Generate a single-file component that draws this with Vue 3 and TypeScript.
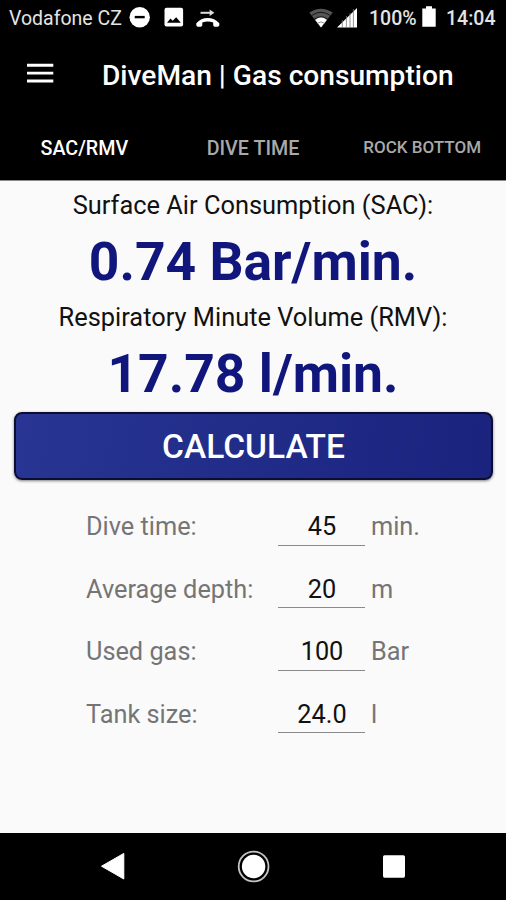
<script setup lang="ts">
import { ref } from 'vue'

interface Field {
  label: string
  value: string
  unit: string
}

const tabs: string[] = ['SAC/RMV', 'DIVE TIME', 'ROCK BOTTOM']
const activeTab = ref(0)

const fields = ref<Field[]>([
  { label: 'Dive time:', value: '45', unit: 'min.' },
  { label: 'Average depth:', value: '20', unit: 'm' },
  { label: 'Used gas:', value: '100', unit: 'Bar' },
  { label: 'Tank size:', value: '24.0', unit: 'l' },
])

const sac = ref('0.74')
const rmv = ref('17.78')

function calculate(): void {
  const [time, depth, gas, tank] = fields.value.map((f) => Number(f.value))
  const rate = gas / time / (depth / 10 + 1)
  sac.value = rate.toFixed(2)
  rmv.value = (rate * tank).toFixed(2)
}
</script>

<template>
  <div class="screen">
    <header class="status">
      <span class="carrier">Vodafone CZ</span>
      <svg class="dnd" width="22" height="22" viewBox="0 0 22 22">
        <circle cx="10.7" cy="11.2" r="10.2" fill="#fff" />
        <rect x="5.7" y="9.9" width="10" height="2.4" fill="#000" />
      </svg>
      <svg class="photo" width="20" height="20" viewBox="0 0 20 20">
        <rect x="0.5" y="0.7" width="18.6" height="18.8" rx="2" fill="#fff" />
        <path d="M3 15.7 L6.5 11.4 L8.7 13.7 L12.2 10.2 L16.8 15.7 Z" fill="#000" />
      </svg>
      <svg class="call" width="24" height="20" viewBox="0 0 24 20">
        <path d="M4.5 3.8 H14.5" fill="none" stroke="#ddd" stroke-width="2" />
        <path d="M13.6 0.6 L18.4 3.8 L13.6 7 Z" fill="#ddd" />
        <path
          d="M0.3 14.2 Q5 9 11.7 9 Q18.6 9 23.3 14.2 V16.6 L22 17.8 H18.4 L17.2 16.6 V13.4 Q11.7 11.6 6.3 13.4 V16.6 L5.1 17.8 H1.5 L0.3 16.6 Z"
          fill="#fff"
        />
      </svg>
      <span class="spacer"></span>
      <svg class="wifi" width="24" height="20" viewBox="0 0 24 20">
        <path d="M0.3 4.5 Q12 -3.2 23.7 4.5 L12 19.5 Z" fill="#555" />
        <path d="M2.8 7.4 Q12 1.2 21.2 7.4 M5.4 11 Q12 6.5 18.6 11" fill="none" stroke="#161616" stroke-width="1" />
        <path d="M6.2 12 Q12 7.2 17.8 12 L12 19.5 Z" fill="#fff" />
        <path d="M8 15.4 Q12 12.4 16 15.4" fill="none" stroke="#777" stroke-width="0.8" />
      </svg>
      <svg class="signal" width="20" height="20" viewBox="0 0 20 20">
        <path d="M0 19.5 L20 0 V19.5 Z" fill="#fff" />
        <path d="M5.3 12 V20 M9.4 8 V20 M13 5 V20 M16.4 1 V20" stroke="#777" stroke-width="0.8" />
      </svg>
      <span class="percent">100%</span>
      <svg class="battery" width="14" height="21" viewBox="0 0 14 21">
        <path d="M0.3 2.5 H4 V0.3 H10 V2.5 H13.7 V20.7 H0.3 Z" fill="#fff" />
      </svg>
      <span class="clock">14:04</span>
    </header>

    <div class="toolbar">
      <svg class="menu" width="27" height="20" viewBox="0 0 27 20">
        <path d="M0 2.2 H26.3 M0 10.1 H26.3 M0 18 H26.3" stroke="#fff" stroke-width="2.9" />
      </svg>
      <h1 class="title">DiveMan | Gas consumption</h1>
    </div>

    <nav class="tabs">
      <button
        v-for="(tab, i) in tabs"
        :key="tab"
        class="tab"
        :class="{ active: i === activeTab, compact: tab.length > 10 }"
        @click="activeTab = i"
      >
        {{ tab }}
      </button>
    </nav>

    <main class="content">
      <p class="caption">Surface Air Consumption (SAC):</p>
      <p class="result">{{ sac }} Bar/min.</p>
      <p class="caption">Respiratory Minute Volume (RMV):</p>
      <p class="result">{{ rmv }} l/min.</p>
      <button class="calculate" @click="calculate">CALCULATE</button>
      <div class="form">
        <label v-for="field in fields" :key="field.label" class="row">
          <span class="label">{{ field.label }}</span>
          <input v-model="field.value" class="value" type="text" />
          <span class="unit">{{ field.unit }}</span>
        </label>
      </div>
    </main>

    <footer class="navbar">
      <svg width="26" height="28" viewBox="0 0 26 28">
        <path d="M1.5 14.2 L23.8 1.4 V27 Z" fill="#fff" stroke="#fff" stroke-linejoin="round" />
      </svg>
      <svg width="34" height="34" viewBox="0 0 34 34">
        <circle cx="16.6" cy="17.5" r="14.9" fill="none" stroke="#c4c4c4" stroke-width="1.8" />
        <circle cx="16.6" cy="17.5" r="11.7" fill="#fff" />
      </svg>
      <svg width="24" height="24" viewBox="0 0 24 24">
        <rect x="1" y="1.2" width="22" height="22.5" rx="1.6" fill="#fff" />
      </svg>
    </footer>
  </div>
</template>

<style>
body {
  margin: 0;
  background: #000;
}
</style>

<style scoped>
.screen {
  width: 506px;
  height: 900px;
  display: flex;
  flex-direction: column;
  overflow: hidden;
  background: #000;
  color: #fff;
  font-family: Roboto, "Liberation Sans", sans-serif;
}
svg {
  display: block;
  flex: none;
}
.status {
  height: 36px;
  display: flex;
  align-items: center;
  padding: 0 11px 0 9px;
  box-sizing: border-box;
  font-size: 19.5px;
  line-height: 36px;
  white-space: nowrap;
  color: #e4e4e4;
}
.status span {
  padding-top: 2px;
}
.carrier {
  width: 120px;
}
.dnd {
  margin-top: -2px;
}
.photo {
  margin: -2px 0 0 13px;
}
.call {
  margin: 2px 0 0 12px;
}
.spacer {
  flex: 1;
}
.wifi {
  margin-top: -1px;
}
.signal {
  margin: -1px 0 0 4px;
}
.percent {
  margin-left: 12px;
  width: 47px;
  font-weight: 500;
}
.battery {
  margin: -3px 0 0 6px;
}
.clock {
  margin-left: 10px;
  width: 49px;
  font-weight: 500;
}
.toolbar {
  height: 79px;
  display: flex;
  align-items: center;
  padding-left: 27px;
}
.menu {
  margin-top: -5px;
}
.title {
  margin: 1px 0 0 48px;
  font-size: 28.15px;
  font-weight: 500;
  line-height: 36px;
  white-space: nowrap;
}
.tabs {
  height: 65px;
  display: grid;
  grid-template-columns: repeat(3, 1fr);
}
.tab {
  padding: 2px 0 0;
  border: 0;
  background: none;
  color: #a9a9a9;
  font: 500 19.7px/63px Roboto, "Liberation Sans", sans-serif;
  white-space: nowrap;
}
.tab.active {
  color: #fff;
}
.tab.compact {
  padding: 0 0 1px 1px;
  font-size: 17px;
}
.content {
  height: 653px;
  box-sizing: border-box;
  border-top: 1px solid #8a8a8a;
  background: #fafafa;
  color: #111;
  display: flex;
  flex-direction: column;
}
p {
  margin: 0;
  text-align: center;
  white-space: nowrap;
}
.caption {
  height: 48px;
  font-size: 25.4px;
  line-height: 48px;
}
.result {
  height: 64px;
  font-size: 53.4px;
  font-weight: 700;
  line-height: 66px;
  color: #10167b;
}
.calculate {
  height: 68px;
  margin: 7px 13px 0 14px;
  padding: 2px 0 0;
  box-sizing: border-box;
  border: 2px solid #0b0d33;
  border-radius: 8px;
  background: linear-gradient(100deg, #283593, #1a237e);
  box-shadow: 0 1px 3px rgba(0, 0, 0, 0.5);
  color: #fff;
  font: 500 33.5px/62px Roboto, "Liberation Sans", sans-serif;
}
.form {
  margin: 15.5px 0 0 86px;
  display: flex;
  flex-direction: column;
}
.row {
  height: 62.5px;
  display: grid;
  grid-template-columns: 192px 87px auto;
  align-items: center;
  font-size: 25.3px;
  color: #757575;
}
.value {
  width: 87px;
  height: 38px;
  padding: 1px 0 0 1px;
  box-sizing: border-box;
  border: 0;
  border-bottom: 1px solid #8a8a8a;
  outline: 0;
  background: none;
  color: #111;
  font: 400 25.3px/36px Roboto, "Liberation Sans", sans-serif;
  text-align: center;
}
.unit {
  padding-left: 6px;
}
.navbar {
  height: 66px;
  display: flex;
  align-items: center;
  padding-left: 100px;
}
.navbar svg + svg {
  margin-left: 111px;
}
</style>
